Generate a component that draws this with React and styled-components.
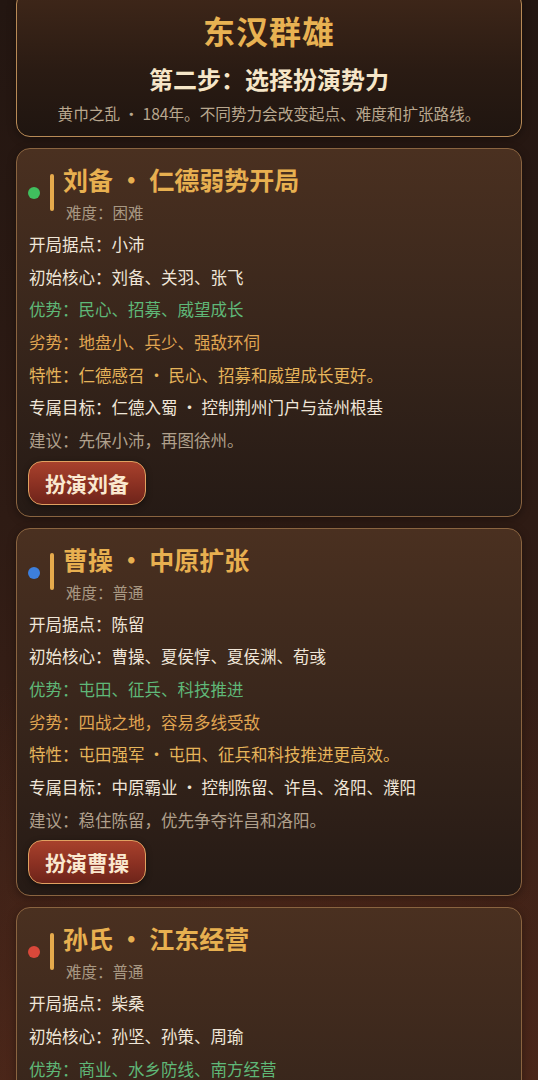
import React from "react";
import styled, { createGlobalStyle } from "styled-components";

const FONT = `"Noto Sans CJK SC", "Noto Sans", sans-serif`;

const Global = createGlobalStyle`
  html, body { margin: 0; padding: 0; }
  body {
    font-family: ${FONT};
    background: #2a1a14;
    background-image:
      radial-gradient(ellipse 80% 60% at 50% 100%, #5a2c1c 0%, rgba(90,44,28,0) 100%),
      linear-gradient(180deg, #231611 0%, #2e1b14 40%, #4a2619 100%);
    min-height: 1080px;
    overflow: hidden;
  }
`;

const Page = styled.div`
  display: flex;
  flex-direction: column;
  gap: 11px;
  padding: 0 16px 20px;
  margin-top: -10px;
`;

const Header = styled.header`
  border: 1px solid #b88a56;
  border-radius: 14px;
  background: linear-gradient(180deg, #3f2719 0%, #2a1b13 55%, #1f1510 100%);
  padding: 17px 12px 12px;
  display: flex;
  flex-direction: column;
  align-items: center;
  box-shadow: 0 2px 8px rgba(0,0,0,0.35);
`;

const Title = styled.h1`
  margin: 0;
  font-size: 32px;
  line-height: 44px;
  font-weight: 700;
  letter-spacing: 1px;
  color: #e8b252;
`;

const Subtitle = styled.h2`
  margin: 10px 0 0;
  font-size: 24px;
  line-height: 34px;
  font-weight: 700;
  color: #f6e6c8;
`;

const Desc = styled.p`
  margin: 6px 0 0;
  font-size: 15.6px;
  line-height: 22px;
  color: #b9a78e;
  white-space: nowrap;
`;

const Card = styled.section`
  border: 1px solid #8a6440;
  border-radius: 14px;
  background: linear-gradient(180deg, #4a3020 0%, #3a271c 45%, #251a15 100%);
  padding: 13px 12px 11px 11px;
  box-shadow: 0 2px 8px rgba(0,0,0,0.35);
`;

const CardHead = styled.div`
  display: flex;
  align-items: center;
  margin-bottom: 6px;
`;

const Dot = styled.span`
  width: 12px;
  height: 12px;
  border-radius: 50%;
  background: ${(p) => p.$color};
  flex: none;
  margin-top: 2px;
`;

const Bar = styled.span`
  width: 4px;
  height: 37px;
  border-radius: 2px;
  background: #e6aa4c;
  margin: 0 9px 0 10px;
  flex: none;
`;

const HeadText = styled.div`
  display: flex;
  flex-direction: column;
`;

const CardTitle = styled.h3`
  margin: 0;
  font-size: 25px;
  line-height: 34px;
  font-weight: 700;
  color: #e8b050;
`;

const Difficulty = styled.div`
  margin: 6px 0 0 3px;
  font-size: 15.5px;
  line-height: 20px;
  color: #a89883;
`;

const tones = {
  normal: "#f0e6d8",
  good: "#5fb878",
  bad: "#e0a552",
  trait: "#e6b45a",
  hint: "#b0a08c",
};

const Row = styled.div`
  padding-left: 1px;
  font-size: 16.5px;
  line-height: 32.67px;
  color: ${(p) => tones[p.$tone || "normal"]};
`;

const PlayButton = styled.button`
  margin-top: 4px;
  height: 44px;
  padding: 0 16px;
  border: 1px solid #e0a060;
  border-radius: 14px;
  background: linear-gradient(180deg, #a8412c 0%, #8a3022 55%, #6e241a 100%);
  color: #fae8cf;
  font-family: ${FONT};
  font-size: 21px;
  font-weight: 700;
  cursor: pointer;
  box-shadow: 0 2px 6px rgba(0,0,0,0.4);
`;

const factions = [
  {
    color: "#40bf5e",
    title: "刘备 · 仁德弱势开局",
    difficulty: "困难",
    base: "小沛",
    core: "刘备、关羽、张飞",
    good: "民心、招募、威望成长",
    bad: "地盘小、兵少、强敌环伺",
    trait: "仁德感召 · 民心、招募和威望成长更好。",
    goal: "仁德入蜀 · 控制荆州门户与益州根基",
    hint: "先保小沛，再图徐州。",
    button: "扮演刘备",
  },
  {
    color: "#3d7fdc",
    title: "曹操 · 中原扩张",
    difficulty: "普通",
    base: "陈留",
    core: "曹操、夏侯惇、夏侯渊、荀彧",
    good: "屯田、征兵、科技推进",
    bad: "四战之地，容易多线受敌",
    trait: "屯田强军 · 屯田、征兵和科技推进更高效。",
    goal: "中原霸业 · 控制陈留、许昌、洛阳、濮阳",
    hint: "稳住陈留，优先争夺许昌和洛阳。",
    button: "扮演曹操",
  },
  {
    color: "#d9483a",
    title: "孙氏 · 江东经营",
    difficulty: "普通",
    base: "柴桑",
    core: "孙坚、孙策、周瑜",
    good: "商业、水乡防线、南方经营",
    bad: "北上压力大，陆战补给不易",
    trait: "江东水师 · 商业和防守更稳固。",
    goal: "江东霸业 · 控制柴桑、建业、吴郡",
    hint: "先稳江东，再图荆州。",
    button: "扮演孙氏",
  },
];

export default function App() {
  return (
    <>
      <Global />
      <Page>
        <Header>
          <Title>东汉群雄</Title>
          <Subtitle>第二步：选择扮演势力</Subtitle>
          <Desc>黄巾之乱 · 184年。不同势力会改变起点、难度和扩张路线。</Desc>
        </Header>
        {factions.map((f) => (
          <Card key={f.title}>
            <CardHead>
              <Dot $color={f.color} />
              <Bar />
              <HeadText>
                <CardTitle>{f.title}</CardTitle>
                <Difficulty>难度：{f.difficulty}</Difficulty>
              </HeadText>
            </CardHead>
            <Row>开局据点：{f.base}</Row>
            <Row>初始核心：{f.core}</Row>
            <Row $tone="good">优势：{f.good}</Row>
            <Row $tone="bad">劣势：{f.bad}</Row>
            <Row $tone="trait">特性：{f.trait}</Row>
            <Row>专属目标：{f.goal}</Row>
            <Row $tone="hint">建议：{f.hint}</Row>
            <PlayButton>{f.button}</PlayButton>
          </Card>
        ))}
      </Page>
    </>
  );
}
